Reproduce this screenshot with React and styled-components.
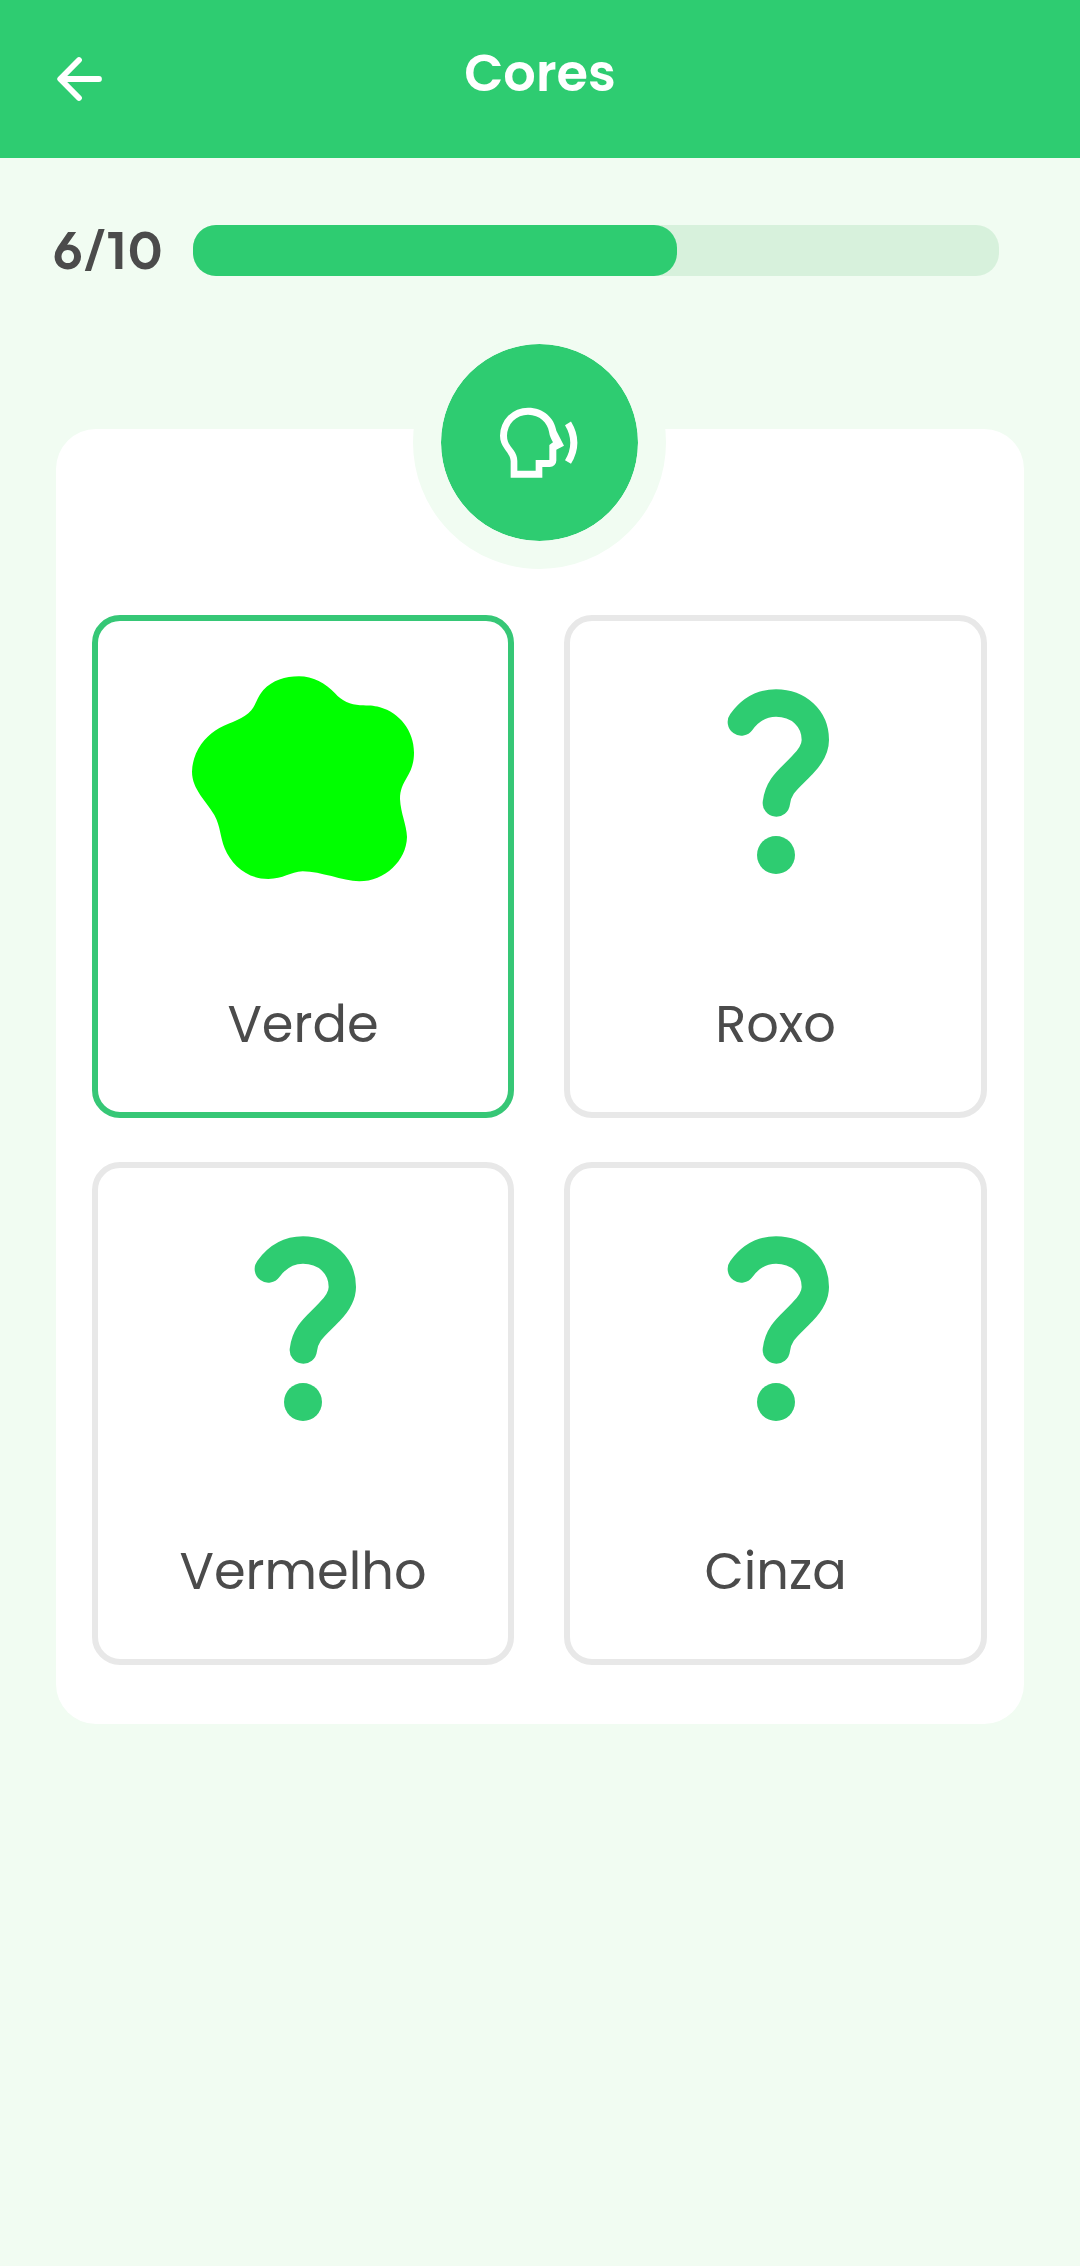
import React from "react";
import styled, { createGlobalStyle } from "styled-components";

const GREEN = "#2ecc71";
const MINT = "#f1fcf2";
const INK = "#4b4b4b";

const GlobalStyle = createGlobalStyle`
  body {
    margin: 0;
    background: ${MINT};
    font-family: Poppins, Inter, sans-serif;
  }

  * {
    box-sizing: border-box;
  }
`;

const Page = styled.div`
  min-height: 2266px;
  background: ${MINT};
  color: ${INK};
`;

const Header = styled.header`
  display: grid;
  grid-template-columns: 1fr auto 1fr;
  align-items: start;
  height: 158px;
  padding: 43px 55px 0 55px;
  background: ${GREEN};
`;

const BackButton = styled.button`
  display: flex;
  justify-self: start;
  margin-top: 11px;
  padding: 0;
  border: none;
  background: none;
`;

const Title = styled.h1`
  margin: 0;
  color: white;
  font-size: 51px;
  font-weight: 600;
  line-height: 60px;
`;

const ProgressRow = styled.div`
  display: flex;
  align-items: center;
  height: 51px;
  margin-top: 67px;
  padding: 0 81px 0 53px;
`;

const Count = styled.span`
  width: 140px;
  padding-bottom: 2px;
  font-family: Outfit, Inter, sans-serif;
  font-size: 52px;
  font-weight: 650;
  line-height: 60px;
  letter-spacing: 2px;
`;

const Track = styled.div`
  flex: 1;
  height: 51px;
  border-radius: 23px;
  background: #d7f1dc;
`;

const Fill = styled.div`
  height: 100%;
  border-radius: 23px;
  background: ${GREEN};
`;

const Panel = styled.main`
  display: flex;
  flex-direction: column;
  align-items: center;
  margin: 153px 56px 0 56px;
  padding: 0 37px 59px 36px;
  border-radius: 40px;
  background: white;
`;

const SpeakButton = styled.button`
  display: flex;
  align-items: center;
  justify-content: center;
  width: 253px;
  height: 253px;
  margin-top: -113px;
  padding: 0;
  border: 28px solid ${MINT};
  border-radius: 50%;
  background: ${GREEN};
  background-clip: padding-box;
`;

const CardGrid = styled.div`
  display: grid;
  grid-template-columns: 422px 423px;
  grid-auto-rows: 503px;
  gap: 43.5px 50px;
  margin-top: 46px;
`;

const Card = styled.div`
  display: flex;
  flex-direction: column;
  align-items: center;
  padding-top: 55px;
  border: 6px solid ${(props) => (props.$active ? "#36c776" : "#e8e8e8")};
  border-radius: 28px;
`;

const Art = styled.svg`
  width: 222px;
  height: 206px;
`;

const Label = styled.span`
  margin-top: 112px;
  font-size: 51px;
  line-height: 60px;
`;

const ArrowIcon = () => (
  <svg
    width="50"
    height="50"
    viewBox="0 0 50 50"
    fill="none"
    stroke="white"
    strokeWidth="5.8"
    strokeLinecap="round"
    strokeLinejoin="round"
  >
    <path d="M24 6L5.2 25L24 44M6 25H44" />
  </svg>
);

const VoiceIcon = () => (
  <svg width="80" height="72" viewBox="301 229 240 216">
    <path
      fill="white"
      fillRule="evenodd"
      d="M333 441V392C331 362 301 352 301 315A84 84 0 0 1 385 231C432 231 464 262 470 300L493 345L470 357V388A20 20 0 0 1 450 409H428V441ZM353 420V391C353 356 322 350 322 315A63 63 0 0 1 385 252C420 252 444 277 448 303C450 317 455 325 460 335L449 343V388H408V420Z"
    />
    <path
      d="M505 278Q540 336 505 394"
      fill="none"
      stroke="white"
      strokeWidth="21"
    />
  </svg>
);

const Blob = ({ color }) => (
  <Art viewBox="336 228 666 618">
    <path
      fill={color}
      d="M657 229C698 229 738 250 765 280C785 303 812 314 840 316C868 317 878 316 900 322C958 338 1002 392 1002 458C1002 490 993 512 981 532C968 555 960 570 960 597C962 640 980 675 981 711C979 782 915 844 838 844C785 842 725 815 668 814C630 816 610 837 565 837C500 837 455 795 434 745C420 710 422 680 403 645C380 604 336 568 336 515C337 460 370 415 405 392C440 370 480 362 505 340C530 318 525 300 550 270C578 241 615 229 657 229Z"
    />
  </Art>
);

const Unknown = () => (
  <Art viewBox="345 228 666 618">
    <path
      d="M574 366C600 330 635 309 678 309C745 309 796 355 796 420C796 450 775 477 757 495C720 535 685 555 679 609"
      fill="none"
      stroke={GREEN}
      strokeWidth="82"
      strokeLinecap="round"
    />
    <circle cx="678" cy="765" r="57" fill={GREEN} />
  </Art>
);

const CARDS = [
  { name: "Verde", color: "#00ff00" },
  { name: "Roxo" },
  { name: "Vermelho" },
  { name: "Cinza" },
];

const App = () => {
  const done = 6;
  const total = 10;
  return (
    <React.Fragment>
      <GlobalStyle />
      <Page>
        <Header>
          <BackButton aria-label="Voltar">
            <ArrowIcon />
          </BackButton>
          <Title>Cores</Title>
        </Header>
        <ProgressRow>
          <Count>
            {done}/{total}
          </Count>
          <Track>
            <Fill style={{ width: `${(done / total) * 100}%` }} />
          </Track>
        </ProgressRow>
        <Panel>
          <SpeakButton aria-label="Ouvir">
            <VoiceIcon />
          </SpeakButton>
          <CardGrid>
            {CARDS.map(({ name, color }) => (
              <Card key={name} $active={Boolean(color)}>
                {color ? <Blob color={color} /> : <Unknown />}
                <Label>{name}</Label>
              </Card>
            ))}
          </CardGrid>
        </Panel>
      </Page>
    </React.Fragment>
  );
};

export default App;
